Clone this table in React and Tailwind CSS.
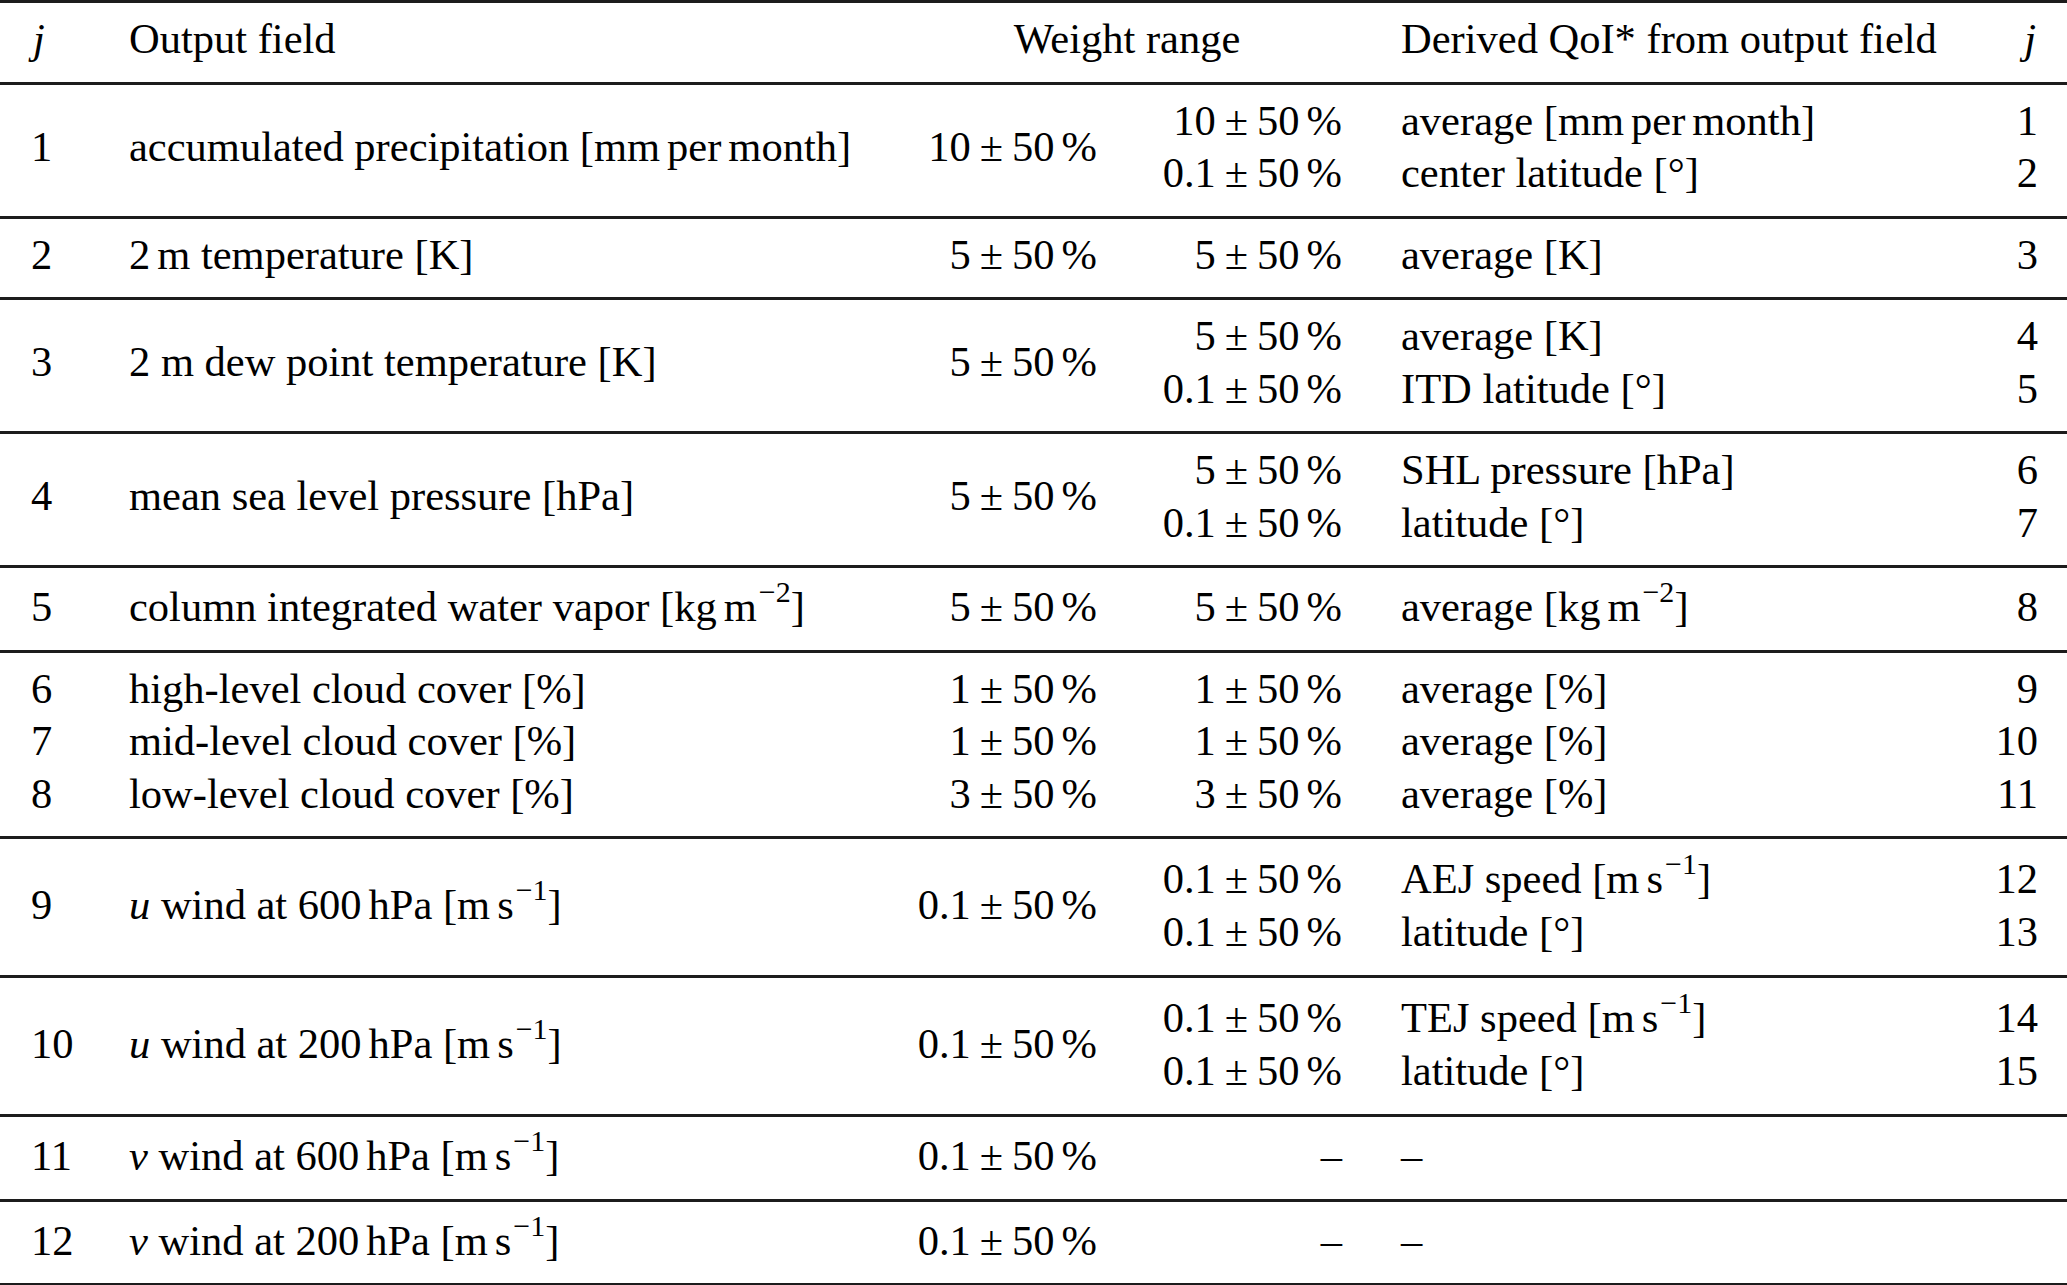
import React from 'react';

// thin space, like LaTeX \,
const Th = () => <span className="inline-block w-[7px]" />;

const Sup = ({ children }) => (
  <span className="relative -top-[19px] ml-[2px] text-[30px] leading-none">{children}</span>
);

const Pm = ({ v }) => (
  <span>
    {v}
    <span className="mx-[9px]">±</span>50<Th />%
  </span>
);

const Dash = () => <span>–</span>;

const Ms = () => (
  <>
    [m<Th />s<Sup>−1</Sup>]
  </>
);

const rows = [
  {
    j: ['1'],
    field: [<>accumulated precipitation [mm<Th />per<Th />month]</>],
    w1: [<Pm v="10" />],
    w2: [<Pm v="10" />, <Pm v="0.1" />],
    qoi: [<>average [mm<Th />per<Th />month]</>, 'center latitude [°]'],
    jj: ['1', '2'],
  },
  {
    j: ['2'],
    field: [<>2<Th />m temperature [K]</>],
    w1: [<Pm v="5" />],
    w2: [<Pm v="5" />],
    qoi: ['average [K]'],
    jj: ['3'],
  },
  {
    j: ['3'],
    field: ['2 m dew point temperature [K]'],
    w1: [<Pm v="5" />],
    w2: [<Pm v="5" />, <Pm v="0.1" />],
    qoi: ['average [K]', 'ITD latitude [°]'],
    jj: ['4', '5'],
  },
  {
    j: ['4'],
    field: ['mean sea level pressure [hPa]'],
    w1: [<Pm v="5" />],
    w2: [<Pm v="5" />, <Pm v="0.1" />],
    qoi: ['SHL pressure [hPa]', 'latitude [°]'],
    jj: ['6', '7'],
  },
  {
    sup: true,
    j: ['5'],
    field: [<>column integrated water vapor [kg<Th />m<Sup>−2</Sup>]</>],
    w1: [<Pm v="5" />],
    w2: [<Pm v="5" />],
    qoi: [<>average [kg<Th />m<Sup>−2</Sup>]</>],
    jj: ['8'],
  },
  {
    j: ['6', '7', '8'],
    field: ['high-level cloud cover [%]', 'mid-level cloud cover [%]', 'low-level cloud cover [%]'],
    w1: [<Pm v="1" />, <Pm v="1" />, <Pm v="3" />],
    w2: [<Pm v="1" />, <Pm v="1" />, <Pm v="3" />],
    qoi: ['average [%]', 'average [%]', 'average [%]'],
    jj: ['9', '10', '11'],
  },
  {
    tall: true,
    j: ['9'],
    field: [<><i>u</i> wind at 600<Th />hPa <Ms /></>],
    w1: [<Pm v="0.1" />],
    w2: [<Pm v="0.1" />, <Pm v="0.1" />],
    qoi: [<>AEJ speed <Ms /></>, 'latitude [°]'],
    jj: ['12', '13'],
  },
  {
    tall: true,
    j: ['10'],
    field: [<><i>u</i> wind at 200<Th />hPa <Ms /></>],
    w1: [<Pm v="0.1" />],
    w2: [<Pm v="0.1" />, <Pm v="0.1" />],
    qoi: [<>TEJ speed <Ms /></>, 'latitude [°]'],
    jj: ['14', '15'],
  },
  {
    sup: true,
    j: ['11'],
    field: [<><i>v</i> wind at 600<Th />hPa <Ms /></>],
    w1: [<Pm v="0.1" />],
    w2: [<Dash />],
    qoi: [<Dash />],
    jj: [],
  },
  {
    sup: true,
    j: ['12'],
    field: [<><i>v</i> wind at 200<Th />hPa <Ms /></>],
    w1: [<Pm v="0.1" />],
    w2: [<Dash />],
    qoi: [<Dash />],
    jj: [],
  },
];

const Cell = ({ lines, className = '' }) => (
  <div className={className}>
    {lines.map((l, i) => (
      <div key={i} className="whitespace-nowrap">
        {l}
      </div>
    ))}
  </div>
);

const gridCols = 'grid grid-cols-[129px_751px_217px_245px_638px_87px] items-center';

const rowPad = (r) => {
  if (r.tall) return 'pt-[14px] pb-[17px]';
  if (r.sup) return 'pt-[13px] pb-[16px]';
  return 'pt-[10px] pb-[16px]';
};

export default function App() {
  return (
    <div className="min-h-screen w-full bg-white text-black">
      <div
        className="border-t-[3px] border-[#1c1c1c] text-[42.5px] leading-[52.5px]"
        style={{ fontFamily: '"Liberation Serif", "Times New Roman", serif' }}
      >
        {/* Header */}
        <div className={`${gridCols} border-b-[3px] border-[#1c1c1c] pt-[10px] pb-[16px]`}>
          <div className="pl-[33px] italic">j</div>
          <div>Output field</div>
          <div className="col-span-2 pl-[32px] text-center">Weight range</div>
          <div className="pl-[59px]">Derived QoI* from output field</div>
          <div className="pr-[31px] text-right italic">j</div>
        </div>

        {rows.map((r, i) => (
          <div key={i} className={`${gridCols} border-b-[3px] border-[#1c1c1c] ${rowPad(r)}`}>
            <Cell lines={r.j} className="pl-[31px]" />
            <Cell lines={r.field} />
            <Cell lines={r.w1} className="text-right" />
            <Cell lines={r.w2} className="text-right" />
            <Cell lines={r.qoi} className="pl-[59px]" />
            <Cell lines={r.jj} className="pr-[29px] text-right" />
          </div>
        ))}
      </div>
    </div>
  );
}
